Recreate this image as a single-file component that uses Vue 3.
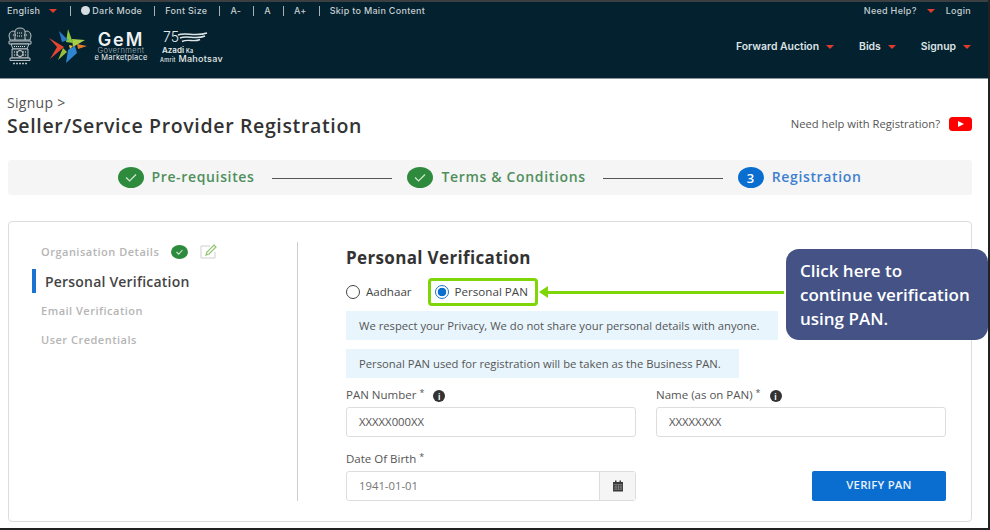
<script setup>
const topLinks = ['Font Size', 'A-', 'A', 'A+', 'Skip to Main Content']
const navItems = ['Forward Auction', 'Bids', 'Signup']
const sideItems = ['Email Verification', 'User Credentials']
const calloutLines = ['Click here to', 'continue verification', 'using PAN.']
</script>

<template>
  <div class="page">
    <header class="header">
      <div class="topbar">
        <div class="topbar__left">
          <span class="top-item">English<i class="caret caret--top"></i></span>
          <span class="top-item"><i class="dot"></i>Dark Mode</span>
          <span v-for="link in topLinks" :key="link" class="top-item">{{ link }}</span>
        </div>
        <div class="topbar__right">
          <span class="help-link">Need Help?<i class="caret caret--help"></i></span>
          <span>Login</span>
        </div>
      </div>

      <div class="mainbar">
        <div class="logos">
          <!-- state emblem -->
          <svg class="emblem" width="26" height="38" viewBox="0 0 26 38">
            <g fill="#18323d" stroke="#c9cfd2" stroke-width="0.9">
              <path d="M2 9c0-3 2-5 4-5s3 2 3 4l-1 5H3z" />
              <path d="M24 9c0-3-2-5-4-5s-3 2-3 4l1 5h5z" />
              <path d="M8 5c0-3 2-4 5-4s5 1 5 4v8H8z" />
              <path d="M2 14h22v3H2z" />
              <path d="M4 17h18l-2 5H6z" />
              <path d="M5 22h16v9H5z" />
              <path d="M3 31h20v2.500H3z" />
            </g>
            <circle cx="13" cy="26.500" r="3" fill="none" stroke="#d8dde0" stroke-width="1" />
            <path d="M6 8h3M17 8h3M10 6h6M10 9h6M7 19.500h12M7 25h3M16 25h3M7 28h3M16 28h3" stroke="#dfe4e6" stroke-width="1" stroke-dasharray="1 1" />
            <path d="M6 36.500h14" stroke="#b3bcc0" stroke-width="1.400" stroke-dasharray="2 1" />
          </svg>

          <svg class="star" width="38" height="36" viewBox="0 0 38 36">
            <path d="M19 1l5 14-7-1z" fill="#8cc63f" />
            <path d="M36 12l-12 7-1-8z" fill="#a9cf4a" />
            <path d="M38 18l-10-2 1 5z" fill="#e47b2b" />
            <path d="M10 3l9 9-6 2z" fill="#2b78c5" />
            <path d="M0 10l15 9-14 12 7-12z" fill="#e8452f" />
            <path d="M9 32l5-12 4 4z" fill="#9bbf3c" />
            <path d="M17 35l2-13 7-4 2 7z" fill="#2e86d0" />
            <path d="M20 17l4 1-3 3z" fill="#f2c14b" />
          </svg>

          <div class="gem">
            <div class="gem__name">GeM</div>
            <div class="gem__gov">Government</div>
            <div class="gem__mkt">e Marketplace</div>
          </div>

          <div class="azadi">
            <div class="azadi__top">
              <span class="azadi__num">75</span>
              <svg width="31" height="12" viewBox="0 0 31 12" fill="none" stroke="#dfe5e7" stroke-width="1.500">
                <path d="M1 4c7-3 18 2 29-2" />
                <path d="M3 7c7-3 16 2 25-2" />
                <path d="M5 10.500c6-3 12 1 18-2" />
              </svg>
            </div>
            <div class="azadi__l1">Azadi <small>Ka</small></div>
            <div class="azadi__l2"><small>Amrit</small> Mahotsav</div>
          </div>
        </div>

        <nav class="nav">
          <span v-for="item in navItems" :key="item" class="nav__item">{{ item }}<i class="caret"></i></span>
        </nav>
      </div>
    </header>

    <main class="content">
      <div class="title-row">
        <div>
          <div class="crumb">Signup &gt;</div>
          <h1 class="title">Seller/Service Provider Registration</h1>
        </div>
        <div class="help">
          <span>Need help with Registration?</span>
          <svg width="23" height="14" viewBox="0 0 23 14">
            <rect width="23" height="14" rx="3.500" fill="#f00" />
            <path d="M9 4l6 3-6 3z" fill="#fff" />
          </svg>
        </div>
      </div>

      <div class="stepper">
        <div class="step step--done step--first">
          <svg width="26" height="21" viewBox="0 0 26 21">
            <ellipse cx="13" cy="10.500" rx="13" ry="10.500" fill="#2e8b3d" />
            <path d="M8 10.500l3.600 3.400L18 7.500" fill="none" stroke="#cfe8d3" stroke-width="1.300" />
          </svg>
          <span class="step__text">Pre-requisites</span>
        </div>
        <span class="step__line"></span>
        <div class="step step--done step--second">
          <svg width="26" height="21" viewBox="0 0 26 21">
            <ellipse cx="13" cy="10.500" rx="13" ry="10.500" fill="#2e8b3d" />
            <path d="M8 10.500l3.600 3.400L18 7.500" fill="none" stroke="#cfe8d3" stroke-width="1.300" />
          </svg>
          <span class="step__text">Terms &amp; Conditions</span>
        </div>
        <span class="step__line"></span>
        <div class="step step--active">
          <span class="step__num">3</span>
          <span class="step__text">Registration</span>
        </div>
      </div>

      <section class="card">
        <aside class="side">
          <div class="side__done">
            <span>Organisation Details</span>
            <svg width="17" height="14" viewBox="0 0 17 14">
              <ellipse cx="8.500" cy="7" rx="8.500" ry="7" fill="#2e8b3d" />
              <path d="M5.500 7l2.200 2.200L11.500 5" fill="none" stroke="#cfe8d3" stroke-width="1.100" />
            </svg>
            <svg width="18" height="15" viewBox="0 0 18 15" fill="none">
              <path d="M10 2H1v12h14V8" stroke="#cfcfcf" stroke-width="1" />
              <path d="M6 11l1-3 7-7 2 2-7 7z" stroke="#8fc56f" stroke-width="1.200" />
            </svg>
          </div>
          <div class="side__active">Personal Verification</div>
          <div v-for="item in sideItems" :key="item" class="side__item">{{ item }}</div>
        </aside>

        <div class="form">
          <h2 class="form__title">Personal Verification</h2>
          <div class="radios">
            <label class="radio"><i class="radio__dot"></i>Aadhaar</label>
            <label class="radio radio--marked"><i class="radio__dot radio__dot--on"></i>Personal PAN</label>
          </div>
          <div class="note note--wide">We respect your Privacy, We do not share your personal details with anyone.</div>
          <div class="note note--short">Personal PAN used for registration will be taken as the Business PAN.</div>

          <div class="fields">
            <div class="field">
              <div class="field__label">PAN Number <sup>*</sup><i class="info">i</i></div>
              <div class="input">XXXXX000XX</div>
            </div>
            <div class="field">
              <div class="field__label">Name (as on PAN) <sup>*</sup><i class="info">i</i></div>
              <div class="input">XXXXXXXX</div>
            </div>
            <div class="field">
              <div class="field__label">Date Of Birth <sup>*</sup></div>
              <div class="input input--date">
                <span class="input__val">1941-01-01</span>
                <span class="input__cal">
                  <svg width="12" height="12" viewBox="0 0 12 12">
                    <rect x="1" y="2" width="10" height="9.500" fill="#3a3a3a" />
                    <rect x="3" y="0.500" width="1.500" height="2.500" fill="#3a3a3a" />
                    <rect x="7.500" y="0.500" width="1.500" height="2.500" fill="#3a3a3a" />
                    <path d="M1.500 4.600h9M1.500 7h9M1.500 9.200h9M4 4.600v5M6.500 4.600v5M9 4.600v5" stroke="#aaa" stroke-width="0.500" />
                  </svg>
                </span>
              </div>
            </div>
            <div class="field field--action">
              <button class="verify" type="button">VERIFY PAN</button>
            </div>
          </div>
        </div>
      </section>
    </main>

    <!-- annotation drawn over the screenshot -->
    <div class="pointer"></div>
    <div class="callout">
      <div v-for="line in calloutLines" :key="line">{{ line }}</div>
    </div>
  </div>
</template>

<style>
html,
body {
  margin: 0;
  background: #fff;
}
</style>

<style scoped>
.page {
  position: relative;
  box-sizing: border-box;
  width: 990px;
  height: 530px;
  overflow: hidden;
  background: #fff;
  border-right: 2px solid #222;
  border-bottom: 2px solid #222;
  font-family: "Open Sans", "Liberation Sans", sans-serif;
  color: #444;
}

.header {
  box-sizing: border-box;
  height: 79px;
  background: #03212e;
  border-top: 2px solid #3b3f42;
  border-bottom: 1px solid #8b969b;
  font-family: Inter, "Open Sans", sans-serif;
  color: #c6ced1;
}

.topbar {
  display: flex;
  justify-content: space-between;
  align-items: center;
  height: 17px;
  padding: 0 17px 0 7px;
  font-size: 9px;
  font-weight: 500;
  letter-spacing: 0.3px;
}

.topbar__left {
  display: flex;
  align-items: center;
}

.topbar__right {
  display: flex;
  gap: 11px;
  align-items: center;
}

.help-link {
  display: flex;
  align-items: center;
}

.top-item {
  display: flex;
  align-items: center;
  height: 10px;
  padding: 0 12px 0 0;
  margin-right: 10px;
  border-right: 1px solid #a8b2b6;
  white-space: nowrap;
}

.top-item:first-child {
  padding-right: 13px;
}

.top-item:last-child {
  border-right: none;
}

.dot {
  width: 9px;
  height: 9px;
  margin-right: 2px;
  border-radius: 50%;
  background: #d5dde0;
}

.caret {
  display: inline-block;
  width: 0;
  height: 0;
  margin-left: 7px;
  border-left: 4px solid transparent;
  border-right: 4px solid transparent;
  border-top: 4px solid #e23b2e;
  vertical-align: middle;
}

.caret--top {
  margin-left: 9px;
}

.caret--help {
  margin-left: 10px;
}

.mainbar {
  display: flex;
  justify-content: space-between;
  align-items: center;
  height: 54px;
  padding: 0 17px 0 7px;
}

.logos {
  display: flex;
  align-items: center;
}

.star {
  margin-left: 16px;
}

.gem {
  width: 54px;
  margin: 0 0 0 7px;
  text-align: center;
  color: #eef2f3;
}

.gem__name {
  height: 15px;
  font-size: 18px;
  line-height: 15px;
  font-weight: 600;
  letter-spacing: 2px;
}

.gem__gov {
  height: 7px;
  font-size: 7.500px;
  line-height: 7px;
  font-weight: 300;
  letter-spacing: 0.400px;
  color: #a9b4b8;
}

.gem__mkt {
  height: 7px;
  font-size: 7.500px;
  line-height: 7px;
  letter-spacing: 0.200px;
  white-space: nowrap;
}

.azadi {
  margin: 0 0 0 12px;
  color: #e4e9ea;
  line-height: 1;
  font-size: 9px;
}

.azadi__top {
  display: flex;
  align-items: center;
  height: 16px;
  padding-bottom: 2px;
  padding-left: 3px;
  box-sizing: border-box;
}

.azadi__num {
  font-size: 14px;
  line-height: 14px;
  font-weight: 300;
  margin-right: -2px;
}

.azadi__l1 {
  height: 8px;
  padding-left: 2px;
  font-size: 8px;
  line-height: 8px;
  font-weight: 600;
}

.azadi__l2 {
  height: 9px;
  line-height: 9px;
  font-weight: 500;
  letter-spacing: 0.300px;
  white-space: nowrap;
}

.azadi small {
  font-size: 5.500px;
}

.nav {
  display: flex;
  gap: 25px;
  font-size: 10.400px;
  font-weight: 600;
  color: #dde3e5;
}

.nav__item {
  white-space: nowrap;
}

.content {
  padding: 0 16px 0 7px;
}

.title-row {
  display: flex;
  justify-content: space-between;
  align-items: flex-start;
  height: 81px;
}

.crumb {
  margin-top: 15px;
  font-size: 14px;
  line-height: 18px;
  letter-spacing: 0.300px;
  color: #555;
}

.title {
  margin: 1px 0 0;
  font-size: 19.500px;
  line-height: 26px;
  font-weight: 600;
  letter-spacing: 0.650px;
  color: #333;
}

.help {
  display: flex;
  align-items: center;
  gap: 9px;
  margin-top: 37px;
  font-size: 11.200px;
  color: #555;
}

.stepper {
  display: flex;
  align-items: center;
  justify-content: center;
  height: 35px;
  margin-left: 1px;
  background: #f5f5f5;
  border-radius: 3px;
}

.step {
  display: flex;
  align-items: center;
  gap: 8px;
  font-size: 14px;
  font-weight: 600;
  letter-spacing: 0.650px;
  white-space: nowrap;
}

.step--first {
  gap: 7px;
}

.step--second {
  gap: 9px;
}

.step__text {
  margin-top: -2px;
}

.step--done {
  color: #4f8f5c;
}

.step--active {
  color: #3f7fd1;
}

.step__line {
  width: 120px;
  height: 1px;
  margin: 2px 15px 0 17px;
  background: #555;
}

.step__num {
  display: flex;
  align-items: center;
  justify-content: center;
  width: 26px;
  height: 21px;
  border-radius: 50%;
  background: #0a6ed1;
  color: #fff;
  font-size: 13px;
}

.card {
  display: flex;
  box-sizing: border-box;
  height: 301px;
  margin: 26px 0 0 1px;
  padding: 20px 25px 20px 23px;
  background: #fff;
  border: 1px solid #ddd;
  border-radius: 4px;
}

.side {
  box-sizing: border-box;
  width: 266px;
  height: 259px;
  border-right: 1px solid #ccc;
  font-size: 11px;
  font-weight: 600;
  letter-spacing: 0.500px;
  color: #b5b5b5;
}

.side__done {
  display: flex;
  align-items: center;
  gap: 12px;
  height: 19px;
  padding-left: 9px;
}

.side__active {
  display: flex;
  align-items: center;
  height: 24px;
  margin-top: 8px;
  padding-left: 9px;
  border-left: 4px solid #1a73d0;
  font-size: 14px;
  letter-spacing: 0.200px;
  color: #444;
}

.side__item {
  height: 18px;
  line-height: 18px;
  margin-top: 11px;
  padding-left: 9px;
}

.side__active + .side__item {
  margin-top: 9px;
}

.form {
  flex: 1;
  padding: 4px 0 0 48px;
}

.form__title {
  margin: 0;
  font-size: 17px;
  line-height: 24px;
  font-weight: 700;
  letter-spacing: 0.350px;
  color: #333;
}

.radios {
  display: flex;
  align-items: center;
  gap: 16px;
  height: 28px;
  margin-top: 8px;
  font-size: 11.600px;
  color: #444;
}

.radio {
  display: flex;
  align-items: center;
  gap: 6px;
  margin-top: -1px;
}

.radio--marked {
  box-sizing: border-box;
  height: 28px;
  margin-top: 0;
  padding: 0 7px 1px 4px;
  border: 3px solid #7ed507;
  border-radius: 4px;
}

.radio__dot {
  box-sizing: border-box;
  width: 14px;
  height: 14px;
  border: 1px solid #444;
  border-radius: 50%;
}

.radio__dot--on {
  border-color: #1a73d0;
  background: radial-gradient(circle, #0a6ed1 0 4px, #fff 4.600px);
}

.note {
  box-sizing: border-box;
  height: 29px;
  padding: 0 13px;
  line-height: 29px;
  background: #e8f5fd;
  font-size: 11.250px;
  color: #555;
  white-space: nowrap;
}

.note--wide {
  width: 432px;
  margin-top: 5px;
}

.note--short {
  width: 393px;
  margin-top: 9px;
}

.fields {
  display: grid;
  grid-template-columns: 290px 290px;
  column-gap: 20px;
  row-gap: 14px;
  margin-top: 9px;
}

.field__label {
  box-sizing: border-box;
  display: flex;
  align-items: center;
  height: 20px;
  padding-bottom: 5px;
  font-size: 11.500px;
  color: #555;
  white-space: pre;
}

.field__label sup {
  align-self: flex-start;
  font-size: 9px;
  line-height: 11px;
}

.info {
  display: flex;
  align-items: center;
  justify-content: center;
  width: 12px;
  height: 12px;
  margin: 3px 0 0 9px;
  border-radius: 50%;
  background: #333;
  color: #fff;
  font-size: 8px;
  font-weight: 700;
  font-style: normal;
}

.input {
  box-sizing: border-box;
  display: flex;
  align-items: center;
  height: 30px;
  padding: 0 12px 2px;
  background: #fff;
  border: 1px solid #ddd;
  border-radius: 3px;
  font-size: 11.300px;
  color: #555;
}

.input--date {
  padding: 0;
  color: #777;
}

.input__val {
  flex: 1;
  padding: 0 0 2px 12px;
}

.input__cal {
  display: flex;
  align-items: center;
  justify-content: center;
  width: 35px;
  height: 100%;
  background: #f5f5f5;
  border-left: 1px solid #ddd;
}

.field--action {
  display: flex;
  align-items: flex-end;
  justify-content: flex-end;
}

.verify {
  width: 134px;
  height: 30px;
  padding: 0 0 3px;
  background: #0a6ed1;
  border: none;
  border-radius: 2px;
  color: #e8f1fa;
  font-family: inherit;
  font-size: 11.400px;
  font-weight: 600;
  letter-spacing: 0.200px;
}

.pointer {
  position: absolute;
  left: 547px;
  top: 291px;
  width: 237px;
  height: 3px;
  background: #7ed507;
}

.pointer::before {
  content: "";
  position: absolute;
  left: -8px;
  top: -5px;
  border-top: 6.500px solid transparent;
  border-bottom: 6.500px solid transparent;
  border-right: 9px solid #7ed507;
}

.callout {
  position: absolute;
  left: 786px;
  top: 249px;
  box-sizing: border-box;
  width: 202px;
  height: 91px;
  padding: 10px 8px 0 14px;
  background: #445285;
  border-radius: 13px;
  color: #fff;
  font-size: 17px;
  font-weight: 600;
  line-height: 24px;
  white-space: nowrap;
}
</style>
